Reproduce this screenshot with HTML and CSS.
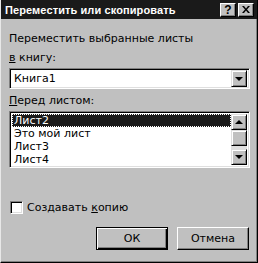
FILE: index.html
```html
<!DOCTYPE html>
<html lang="ru">
    <head>
        <meta charset="UTF-8" />
        <title>Переместить или скопировать</title>
        <link rel="stylesheet" href="styles.css">
    </head>
    <body>
        <div class="window">
            <div class="titlebar">
                <span class="title">Переместить или скопировать</span>
                <div class="title-buttons">
                    <span class="tbtn">?</span>
                    <span class="tbtn">
                        <svg width="8" height="7" viewBox="0 0 8 7">
                            <path d="M0 0h2l2 2.5L6 0h2L5 3.5 8 7H6L4 4.5 2 7H0l3-3.5z" fill="#000" />
                        </svg>
                    </span>
                </div>
            </div>
            <div class="content">
                <div class="caption">Переместить выбранные листы</div>
                <div class="label"><u>в</u> книгу:</div>
                <div class="combo">
                    <span class="combo-text">Книга1</span>
                    <span class="arrow-btn"><span class="arrow-down"></span></span>
                </div>
                <div class="label label-list"><u>П</u>еред листом:</div>
                <div class="listbox">
                    <ul class="items">
                        <li class="selected">Лист2</li>
                        <li>Это мой лист</li>
                        <li>Лист3</li>
                        <li>Лист4</li>
                    </ul>
                    <div class="scrollbar">
                        <span class="arrow-btn"><span class="arrow-up"></span></span>
                        <span class="thumb"></span>
                        <span class="track"></span>
                        <span class="arrow-btn"><span class="arrow-down"></span></span>
                    </div>
                </div>
                <label class="check">
                    <span class="box"></span>
                    <span>Создавать <u>к</u>опию</span>
                </label>
                <div class="buttons">
                    <button class="btn default">ОК</button>
                    <button class="btn">Отмена</button>
                </div>
            </div>
        </div>
    </body>
</html>
```

FILE: styles.css
```css
* {
    box-sizing: border-box;
}

body {
    margin: 0;
    font-family: "DejaVu Sans", Verdana, sans-serif;
    font-size: 11px;
    color: #000;
    background-color: #c0c0c0;
}

.window {
    width: 258px;
    height: 263px;
    background-color: #c0c0c0;
    border-left: 1px solid #e8e8e8;
    border-right: 1px solid #000;
    border-bottom: 1px solid #000;
    box-shadow: inset -1px -1px 0 #808080;
    display: flex;
    flex-direction: column;
}

.titlebar {
    height: 19px;
    background-color: #1a1a1a;
    display: flex;
    align-items: center;
    justify-content: space-between;
    padding: 0 3px 0 4px;
}

.title {
    color: #fff;
    font-family: "Liberation Sans", Arial, sans-serif;
    font-weight: bold;
    font-size: 11px;
    letter-spacing: 0.1px;
}

.title-buttons {
    display: flex;
    gap: 2px;
}

.tbtn {
    width: 16px;
    height: 14px;
    background-color: #c0c0c0;
    border-top: 1px solid #fff;
    border-left: 1px solid #fff;
    border-right: 1px solid #000;
    border-bottom: 1px solid #000;
    box-shadow: inset -1px -1px 0 #808080;
    display: flex;
    align-items: center;
    justify-content: center;
    font-family: "Liberation Sans", Arial, sans-serif;
    font-weight: bold;
    font-size: 12px;
    line-height: 12px;
}

.content {
    flex: 1;
    padding: 13px 8px 0 8px;
    display: flex;
    flex-direction: column;
}

.caption {
    line-height: 14px;
}

.label {
    margin-top: 5px;
    line-height: 14px;
}

.label-list {
    margin-top: 5px;
}

.combo {
    margin-top: 3px;
    width: 241px;
    height: 21px;
    background-color: #fff;
    border-top: 1px solid #808080;
    border-left: 1px solid #808080;
    border-right: 1px solid #fff;
    border-bottom: 1px solid #fff;
    box-shadow: inset 1px 1px 0 #000, inset -1px -1px 0 #dfdfdf;
    display: flex;
    align-items: center;
    justify-content: space-between;
    padding: 2px;
}

.combo-text {
    padding-left: 2px;
}

.arrow-btn {
    width: 16px;
    height: 17px;
    background-color: #c0c0c0;
    border-top: 1px solid #dfdfdf;
    border-left: 1px solid #dfdfdf;
    border-right: 1px solid #000;
    border-bottom: 1px solid #000;
    box-shadow: inset 1px 1px 0 #fff, inset -1px -1px 0 #808080;
    display: flex;
    align-items: center;
    justify-content: center;
}

.arrow-down {
    width: 0;
    height: 0;
    border-left: 4px solid transparent;
    border-right: 4px solid transparent;
    border-top: 4px solid #000;
}

.arrow-up {
    width: 0;
    height: 0;
    border-left: 4px solid transparent;
    border-right: 4px solid transparent;
    border-bottom: 4px solid #000;
}

.listbox {
    margin-top: 3px;
    width: 241px;
    height: 57px;
    background-color: #fff;
    border-top: 1px solid #808080;
    border-left: 1px solid #808080;
    border-right: 1px solid #fff;
    border-bottom: 1px solid #fff;
    box-shadow: inset 1px 1px 0 #000, inset -1px -1px 0 #dfdfdf;
    padding: 2px;
    display: flex;
}

.items {
    flex: 1;
    margin: 0;
    padding: 0;
    list-style: none;
}

.items li {
    height: 13px;
    line-height: 13px;
    padding-left: 2px;
}

.items li.selected {
    background-color: #1a1a1a;
    color: #fff;
    outline: 1px dotted #fff;
    outline-offset: -1px;
}

.scrollbar {
    width: 16px;
    display: flex;
    flex-direction: column;
}

.scrollbar .arrow-btn {
    height: 16px;
}

.thumb {
    height: 16px;
    background-color: #c0c0c0;
    border-top: 1px solid #dfdfdf;
    border-left: 1px solid #dfdfdf;
    border-right: 1px solid #000;
    border-bottom: 1px solid #000;
    box-shadow: inset 1px 1px 0 #fff, inset -1px -1px 0 #808080;
}

.track {
    flex: 1;
    background-color: #e0e0e0;
}

.check {
    margin-top: 33px;
    display: flex;
    align-items: center;
    gap: 4px;
    padding-left: 1px;
}

.box {
    width: 13px;
    height: 13px;
    background-color: #fff;
    border-top: 1px solid #808080;
    border-left: 1px solid #808080;
    border-right: 1px solid #fff;
    border-bottom: 1px solid #fff;
    box-shadow: inset 1px 1px 0 #000, inset -1px -1px 0 #dfdfdf;
}

.buttons {
    margin-top: 13px;
    display: flex;
    justify-content: flex-end;
    gap: 9px;
    padding-right: 0;
}

.btn {
    width: 72px;
    height: 23px;
    font-family: "DejaVu Sans", Verdana, sans-serif;
    font-size: 11px;
    background-color: #c0c0c0;
    border-top: 1px solid #fff;
    border-left: 1px solid #fff;
    border-right: 1px solid #000;
    border-bottom: 1px solid #000;
    box-shadow: inset -1px -1px 0 #808080;
    padding: 0;
}

.btn.default {
    border: 1px solid #000;
    box-shadow: inset 1px 1px 0 #fff, inset -1px -1px 0 #000, inset -2px -2px 0 #808080;
}
```
